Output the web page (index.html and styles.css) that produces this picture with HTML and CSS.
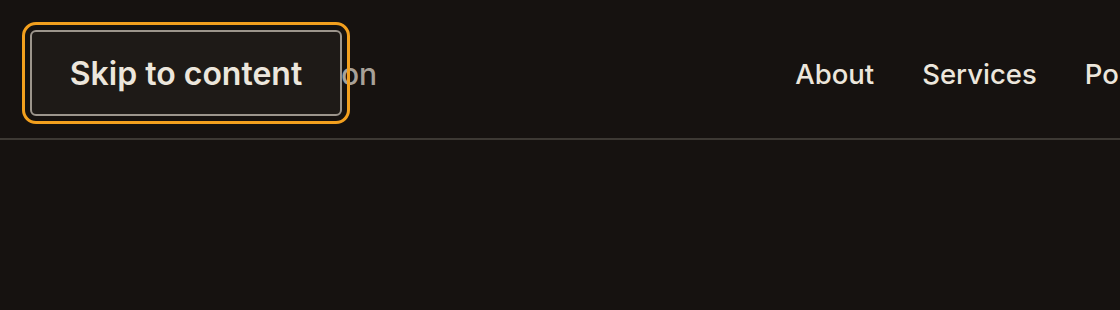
FILE: index.html
```html
<!DOCTYPE html>
<html lang="en">
<head>
  <meta charset="UTF-8" />
  <meta name="viewport" content="width=device-width, initial-scale=1.0" />
  <title>Meridian Construction</title>
  <link rel="stylesheet" href="styles.css">
</head>
<body>
  <a class="skip-link" href="#main">Skip to content</a>
  <header class="site-header">
    <a class="logo" href="#">Meridian Construction</a>
    <nav class="nav">
      <a href="#">About</a>
      <a href="#">Services</a>
      <a href="#">Portfolio</a>
      <a href="#">Contact</a>
    </nav>
  </header>
  <main id="main"></main>
</body>
</html>
```
FILE: styles.css
```css
body {
  margin: 0;
  background-color: #161210;
  color: #ece6dc;
  font-family: Inter, "Noto Sans", sans-serif;
  overflow: hidden;
}
a {
  color: inherit;
  text-decoration: none;
}
.site-header {
  height: 140px;
  box-sizing: border-box;
  padding: 10px 0 0 58px;
  border-bottom: 2px solid #3d3934;
  display: flex;
  align-items: center;
  justify-content: space-between;
  white-space: nowrap;
}
.logo {
  font-size: 30px;
  font-weight: 500;
  color: #a8a198;
}
.nav {
  display: flex;
  gap: 48px;
  margin-right: -227px;
}
.nav a {
  font-size: 27.5px;
  font-weight: 500;
}
.skip-link {
  position: absolute;
  top: 30px;
  left: 30px;
  width: 308px;
  height: 82px;
  display: flex;
  align-items: center;
  justify-content: center;
  background-color: #1e1a17;
  border: 2px solid #9c958c;
  border-radius: 6px;
  outline: 3px solid #f3a01e;
  outline-offset: 5px;
  font-size: 32px;
  font-weight: 600;
  color: #ece6dc;
  z-index: 2;
}
main {
  height: 170px;
}
```
